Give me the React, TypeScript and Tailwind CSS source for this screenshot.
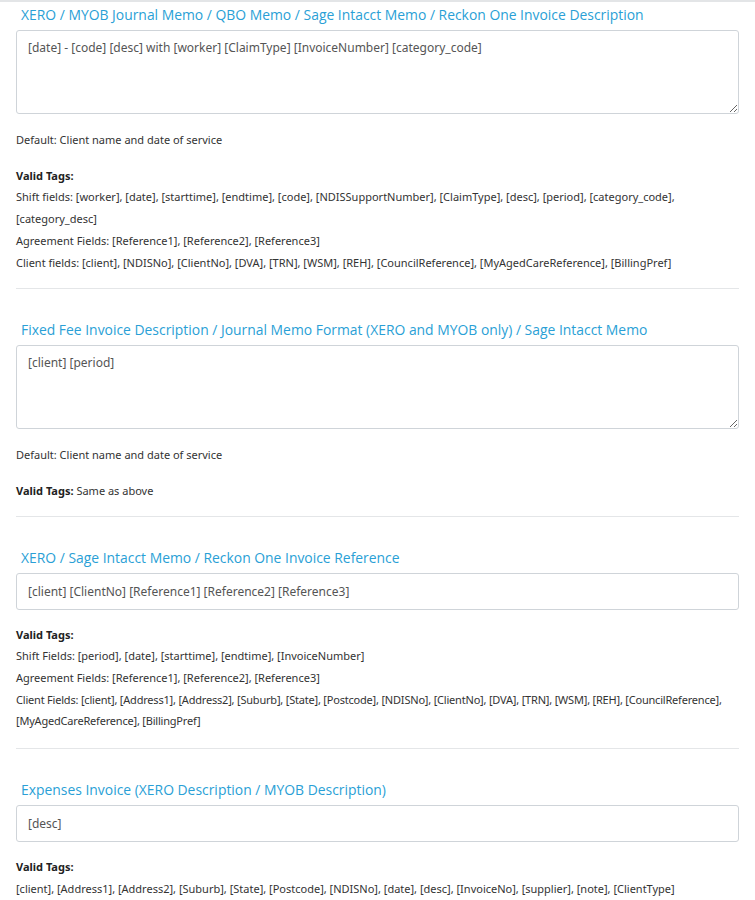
import React from "react";

const headingCls = "pl-[5px] text-[13.9px] leading-[20px] text-[#2a9fd6] font-['Open_Sans',sans-serif]";
const boxCls =
  "block w-full border border-[#cfd4d9] rounded-[3px] bg-white px-[11px] text-[12px] text-[#555] font-['Noto_Sans',sans-serif] outline-none";
const textCls = "text-[11px] leading-[21.7px] text-[#333]";

const Heading = ({ children, first }: { children: React.ReactNode; first?: boolean }) => (
  <h3 className={`${headingCls} ${first ? "mt-[3px]" : "mt-[31px]"}`}>{children}</h3>
);

const Area = ({ value }: { value: string }) => (
  <textarea
    defaultValue={value}
    className={`${boxCls} mt-[5px] h-[84px] py-[7px] leading-[20px]`}
  />
);

const Input = ({ value }: { value: string }) => (
  <input type="text" defaultValue={value} className={`${boxCls} mt-[5px] h-[37px] leading-[20px]`} />
);

type Line = { text: string; tight?: boolean };

const Tags = ({ lines, top = "mt-[14px]" }: { lines: Line[]; top?: string }) => (
  <div className={`${textCls} ${top}`}>
    <div className="font-bold text-[#222]">Valid Tags:</div>
    {lines.map((l) => (
      <div key={l.text} className={l.tight ? "tracking-[-0.2px]" : ""}>
        {l.text}
      </div>
    ))}
  </div>
);

const Divider = ({ top = "mt-[15px]" }: { top?: string }) => (
  <hr className={`${top} border-0 border-t border-[#e4e6e8]`} />
);

export default function App() {
  return (
    <div className="min-h-[900px] bg-white border-t-2 border-[#e3e5e7] font-['Noto_Sans',sans-serif]">
      <div className="px-[16px] pb-6">
        <Heading first>XERO / MYOB Journal Memo / QBO Memo / Sage Intacct Memo / Reckon One Invoice Description</Heading>
        <Area value="[date] - [code] [desc] with [worker] [ClaimType] [InvoiceNumber] [category_code]" />
        <p className={`${textCls} mt-[15px]`}>Default: Client name and date of service</p>
        <Tags
          lines={[
            { text: "Shift fields: [worker], [date], [starttime], [endtime], [code], [NDISSupportNumber], [ClaimType], [desc], [period], [category_code], [category_desc]" },
            { text: "Agreement Fields: [Reference1], [Reference2], [Reference3]" },
            { text: "Client fields: [client], [NDISNo], [ClientNo], [DVA], [TRN], [WSM], [REH], [CouncilReference], [MyAgedCareReference], [BillingPref]" },
          ]}
        />
        <Divider />

        <Heading>Fixed Fee Invoice Description / Journal Memo Format (XERO and MYOB only) / Sage Intacct Memo</Heading>
        <Area value="[client] [period]" />
        <p className={`${textCls} mt-[15px]`}>Default: Client name and date of service</p>
        <p className={`${textCls} mt-[14px]`}>
          <span className="font-bold text-[#222]">Valid Tags:</span> Same as above
        </p>
        <Divider top="mt-[14px]" />

        <Heading>XERO / Sage Intacct Memo / Reckon One Invoice Reference</Heading>
        <Input value="[client] [ClientNo] [Reference1] [Reference2] [Reference3]" />
        <Tags
          top="mt-[14px]"
          lines={[
            { text: "Shift Fields: [period], [date], [starttime], [endtime], [InvoiceNumber]" },
            { text: "Agreement Fields: [Reference1], [Reference2], [Reference3]" },
            {
              text: "Client Fields: [client], [Address1], [Address2], [Suburb], [State], [Postcode], [NDISNo], [ClientNo], [DVA], [TRN], [WSM], [REH], [CouncilReference], [MyAgedCareReference], [BillingPref]",
              tight: true,
            },
          ]}
        />
        <Divider top="mt-[16px]" />

        <Heading>Expenses Invoice (XERO Description / MYOB Description)</Heading>
        <Input value="[desc]" />
        <Tags
          lines={[
            { text: "[client], [Address1], [Address2], [Suburb], [State], [Postcode], [NDISNo], [date], [desc], [InvoiceNo], [supplier], [note], [ClientType]" },
          ]}
        />
      </div>
    </div>
  );
}
